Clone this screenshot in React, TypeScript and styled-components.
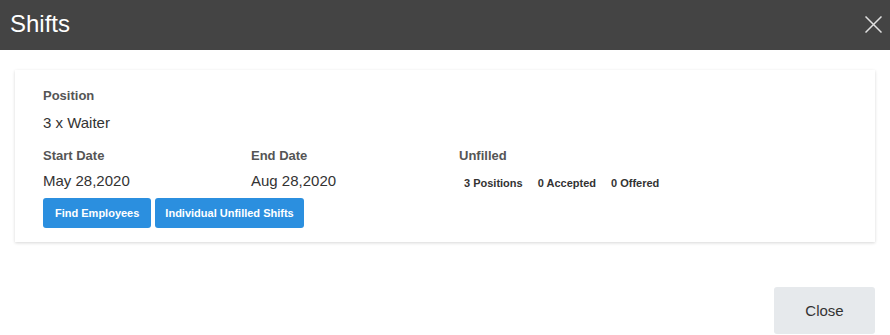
import React from "react";
import styled, { createGlobalStyle } from "styled-components";

const Global = createGlobalStyle`
  html, body { margin: 0; padding: 0; background: #fff; }
  body { font-family: "Liberation Sans", Arial, sans-serif; }
  * { box-sizing: border-box; }
`;

const Modal = styled.div`
  width: 890px;
  height: 335px;
  display: flex;
  flex-direction: column;
  background: #fff;
`;

const Header = styled.div`
  height: 50px;
  background: #444444;
  display: flex;
  align-items: center;
  justify-content: space-between;
  padding: 0 5px 2px 10px;
`;

const Title = styled.h1`
  margin: 0;
  font-size: 24px;
  font-weight: 400;
  color: #fff;
  line-height: 1;
`;

const CloseX = styled.button`
  border: 0;
  background: transparent;
  padding: 0;
  width: 24px;
  height: 24px;
  display: flex;
  align-items: center;
  justify-content: center;
  cursor: pointer;
  margin-top: 1px;
`;

const Body = styled.div`
  padding: 20px 15px 0 15px;
`;

const Card = styled.div`
  background: #fff;
  box-shadow: 0 1px 3px rgba(0, 0, 0, 0.16);
  padding: 16px 28px 13px 28px;
  display: flex;
  flex-direction: column;
  height: 172px;
`;

const Label = styled.div`
  font-size: 13px;
  font-weight: 700;
  color: #555;
  line-height: 20px;
`;

const Value = styled.div`
  font-size: 15px;
  color: #333;
  line-height: 20px;
`;

const Field = styled.div<{ $gap: number }>`
  display: flex;
  flex-direction: column;
  gap: ${(p) => p.$gap}px;
`;

const Grid = styled.div`
  display: grid;
  grid-template-columns: 208px 208px 208px;
  margin-top: 13px;
`;

const Stats = styled.div`
  display: flex;
  gap: 15px;
  padding-left: 5px;
  height: 20px;
  align-items: center;
  padding-top: 4px;
`;

const Stat = styled.span`
  font-size: 11px;
  font-weight: 700;
  color: #333;
`;

const Actions = styled.div`
  display: flex;
  gap: 4px;
  margin-top: 7px;
`;

const PrimaryButton = styled.button<{ $pad: number }>`
  height: 30px;
  padding: 0 ${(p) => p.$pad}px;
  border: 0;
  border-radius: 3px;
  background: #2b8fdf;
  color: #fff;
  font-family: "Liberation Sans", Arial, sans-serif;
  font-size: 11px;
  font-weight: 700;
  cursor: pointer;
`;

const Footer = styled.div`
  display: flex;
  justify-content: flex-end;
  padding: 45px 15px 0 0;
`;

const SecondaryButton = styled.button`
  width: 101px;
  height: 47px;
  border: 0;
  border-radius: 3px;
  background: #e6e9ec;
  color: #333;
  font-family: "Liberation Sans", Arial, sans-serif;
  font-size: 15px;
  cursor: pointer;
`;

export default function App() {
  return (
    <Modal>
      <Global />
      <Header>
        <Title>Shifts</Title>
        <CloseX aria-label="close">
          <svg width="17" height="17" viewBox="0 0 17 17">
            <path d="M0.5 0.5 L16.5 16.5 M16.5 0.5 L0.5 16.5" stroke="#e0e0e0" strokeWidth="1.5" />
          </svg>
        </CloseX>
      </Header>
      <Body>
        <Card>
          <Field $gap={7}>
            <Label>Position</Label>
            <Value>3 x Waiter</Value>
          </Field>
          <Grid>
            <Field $gap={5}>
              <Label>Start Date</Label>
              <Value>May 28,2020</Value>
            </Field>
            <Field $gap={5}>
              <Label>End Date</Label>
              <Value>Aug 28,2020</Value>
            </Field>
            <Field $gap={5}>
              <Label>Unfilled</Label>
              <Stats>
                <Stat>3 Positions</Stat>
                <Stat>0 Accepted</Stat>
                <Stat>0 Offered</Stat>
              </Stats>
            </Field>
          </Grid>
          <Actions>
            <PrimaryButton $pad={12}>Find Employees</PrimaryButton>
            <PrimaryButton $pad={10}>Individual Unfilled Shifts</PrimaryButton>
          </Actions>
        </Card>
      </Body>
      <Footer>
        <SecondaryButton>Close</SecondaryButton>
      </Footer>
    </Modal>
  );
}
